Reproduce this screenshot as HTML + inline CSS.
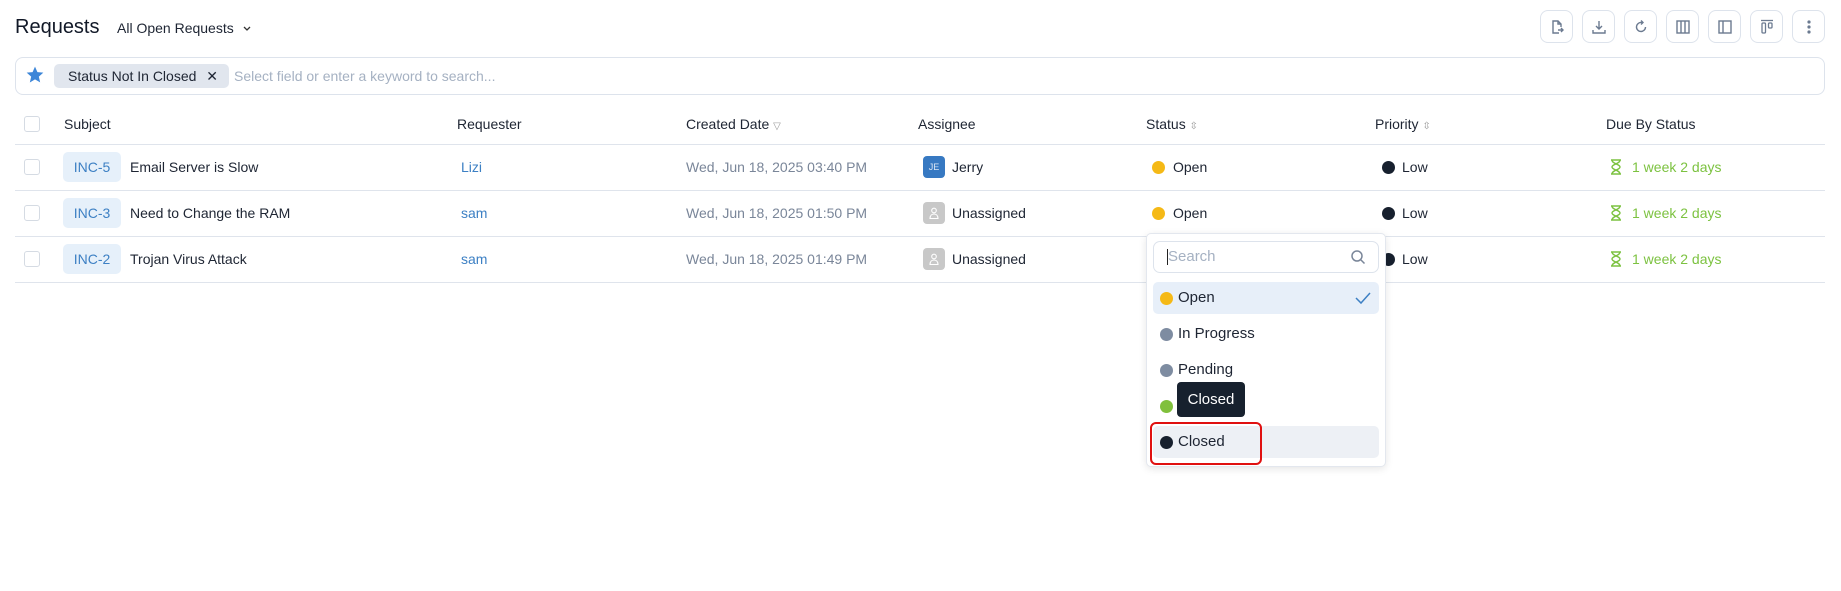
<!DOCTYPE html>
<html><head><meta charset="utf-8"><style>
*{box-sizing:border-box;margin:0;padding:0}
body{width:1841px;height:591px;background:#fff;font-family:"Liberation Sans",sans-serif;color:#1e2533;position:relative;overflow:hidden}
.a{position:absolute;white-space:nowrap}
.t14{font-size:14px;line-height:18px}
.btn{position:absolute;top:10px;width:33px;height:33px;border:1px solid #dde3ec;border-radius:8px;display:flex;align-items:center;justify-content:center}
.line{position:absolute;left:15px;width:1810px;height:1px;background:#dfe4ec}
.cb{position:absolute;left:24px;width:16px;height:16px;border:1px solid #d5dbe3;border-radius:3px;background:#fff}
.pill{position:absolute;left:63px;width:58px;height:30px;background:#e6f0fa;border-radius:5px;color:#3d80c4;font-size:14px;line-height:30px;text-align:center}
.dot{position:absolute;width:13px;height:13px;border-radius:50%}
.blue{color:#3d80c4}.gray{color:#7a8699}.green{color:#7cc240}
.av{position:absolute;left:923px;width:22px;height:22px;background:#c8c8c8;border-radius:4px;display:flex;align-items:center;justify-content:center}
</style></head><body>
<div class="a" style="left:15px;top:15px;font-size:20px;line-height:24px;color:#111827">Requests</div>
<div class="a t14" style="left:117px;top:19px">All Open Requests <svg width="10" height="8" viewBox="0 0 10 8" style="margin-left:4px"><path d="M2 2l3 3 3-3" fill="none" stroke="#333" stroke-width="1.3"/></svg></div>

<div class="btn" style="left:1540px"><svg width="16" height="16" viewBox="0 0 16 16" fill="none" stroke="#6b7a90" stroke-width="1.4"><path d="M10 14H4V2h5l3 3v3"/><path d="M9 2v3h3"/><path d="M9 11h5M12 9l2 2-2 2"/></svg></div>
<div class="btn" style="left:1582px"><svg width="16" height="16" viewBox="0 0 16 16" fill="none" stroke="#6b7a90" stroke-width="1.4"><path d="M8 2v8M5 7l3 3 3-3M2 11v3h12v-3"/></svg></div>
<div class="btn" style="left:1624px"><svg width="16" height="16" viewBox="0 0 16 16" fill="none" stroke="#6b7a90" stroke-width="1.4"><path d="M12.5 8A4.5 4.5 0 1 1 9 3.6"/><path d="M8 1.5l2 2-2 2"/></svg></div>
<div class="btn" style="left:1666px"><svg width="16" height="16" viewBox="0 0 16 16" fill="none" stroke="#6b7a90" stroke-width="1.4"><rect x="2" y="2" width="12" height="12"/><path d="M6 2v12M10 2v12"/></svg></div>
<div class="btn" style="left:1708px"><svg width="16" height="16" viewBox="0 0 16 16" fill="none" stroke="#6b7a90" stroke-width="1.4"><rect x="2" y="2" width="12" height="12"/><path d="M6 2v12"/></svg></div>
<div class="btn" style="left:1750px"><svg width="16" height="16" viewBox="0 0 16 16" fill="none" stroke="#6b7a90" stroke-width="1.3"><path d="M2 1.5h12"/><rect x="3" y="4" width="3.5" height="10" rx="1"/><rect x="9.5" y="4" width="3.5" height="5" rx="1"/></svg></div>
<div class="btn" style="left:1792px"><svg width="6" height="16" viewBox="0 0 6 16" fill="#6b7a90"><circle cx="3" cy="3" r="1.6"/><circle cx="3" cy="8" r="1.6"/><circle cx="3" cy="13" r="1.6"/></svg></div>

<div class="a" style="left:15px;top:57px;width:1810px;height:38px;border:1px solid #dde3ec;border-radius:8px"></div>
<svg class="a" style="left:25px;top:65px" width="20" height="20" viewBox="0 0 24 24"><path d="M12 2l2.9 6.6 7.1.6-5.4 4.7 1.6 7L12 17.3 5.8 21l1.6-7L2 9.2l7.1-.6z" fill="#3d86d8"/></svg>
<div class="a t14" style="left:54px;top:64px;width:175px;height:24px;background:#e1e6ee;border-radius:5px;line-height:24px;padding-left:14px;color:#1e2533">Status Not In Closed <span style="margin-left:6px">✕</span></div>
<div class="a t14" style="left:234px;top:67px;color:#a5b1c2">Select field or enter a keyword to search...</div>

<div class="cb" style="top:116px"></div>
<div class="a t14" style="left:64px;top:115px">Subject</div>
<div class="a t14" style="left:457px;top:115px">Requester</div>
<div class="a t14" style="left:686px;top:115px">Created Date <span style="color:#999;font-size:10px">▽</span></div>
<div class="a t14" style="left:918px;top:115px">Assignee</div>
<div class="a t14" style="left:1146px;top:115px">Status <span style="color:#999;font-size:10px">⇳</span></div>
<div class="a t14" style="left:1375px;top:115px">Priority <span style="color:#999;font-size:10px">⇳</span></div>
<div class="a t14" style="left:1606px;top:115px">Due By Status</div>
<div class="line" style="top:144px"></div>

<div class="cb" style="top:159px"></div>
<div class="pill" style="top:152px">INC-5</div>
<div class="a t14" style="left:130px;top:158px">Email Server is Slow</div>
<div class="a t14 blue" style="left:461px;top:158px">Lizi</div>
<div class="a t14 gray" style="left:686px;top:158px">Wed, Jun 18, 2025 03:40 PM</div>
<div class="a" style="left:923px;top:156px;width:22px;height:22px;background:#3779c2;border-radius:4px;color:#dbe7f5;font-size:9px;line-height:22px;text-align:center">JE</div>
<div class="a t14" style="left:952px;top:158px">Jerry</div>
<div class="dot" style="left:1152px;top:161px;background:#f5b916"></div>
<div class="a t14" style="left:1173px;top:158px">Open</div>
<div class="dot" style="left:1382px;top:161px;background:#17202e"></div>
<div class="a t14" style="left:1402px;top:158px">Low</div>
<div class="line" style="top:190px"></div>

<div class="cb" style="top:205px"></div>
<div class="pill" style="top:198px">INC-3</div>
<div class="a t14" style="left:130px;top:204px">Need to Change the RAM</div>
<div class="a t14 blue" style="left:461px;top:204px">sam</div>
<div class="a t14 gray" style="left:686px;top:204px">Wed, Jun 18, 2025 01:50 PM</div>
<div class="av" style="top:202px"><svg width="10" height="12" viewBox="0 0 10 12" fill="none" stroke="#fff" stroke-width="1.1"><circle cx="5" cy="3.5" r="2.3"/><path d="M1 11.5c0-3 1.8-4.5 4-4.5s4 1.5 4 4.5z"/></svg></div>
<div class="a t14" style="left:952px;top:204px">Unassigned</div>
<div class="dot" style="left:1152px;top:207px;background:#f5b916"></div>
<div class="a t14" style="left:1173px;top:204px">Open</div>
<div class="dot" style="left:1382px;top:207px;background:#17202e"></div>
<div class="a t14" style="left:1402px;top:204px">Low</div>
<div class="line" style="top:236px"></div>

<div class="cb" style="top:251px"></div>
<div class="pill" style="top:244px">INC-2</div>
<div class="a t14" style="left:130px;top:250px">Trojan Virus Attack</div>
<div class="a t14 blue" style="left:461px;top:250px">sam</div>
<div class="a t14 gray" style="left:686px;top:250px">Wed, Jun 18, 2025 01:49 PM</div>
<div class="av" style="top:248px"><svg width="10" height="12" viewBox="0 0 10 12" fill="none" stroke="#fff" stroke-width="1.1"><circle cx="5" cy="3.5" r="2.3"/><path d="M1 11.5c0-3 1.8-4.5 4-4.5s4 1.5 4 4.5z"/></svg></div>
<div class="a t14" style="left:952px;top:250px">Unassigned</div>
<div class="dot" style="left:1382px;top:253px;background:#17202e"></div>
<div class="a t14" style="left:1402px;top:250px">Low</div>
<div class="line" style="top:282px"></div>

<svg class="a" style="left:1610px;top:159px" width="12" height="16" viewBox="0 0 12 16" fill="none" stroke="#7cc240" stroke-width="1.4"><path d="M1 1h10M1 15h10M2 1c0 4 8 4 8 7s-8 3-8 7M10 1c0 4-8 4-8 7s8 3 8 7"/></svg>
<div class="a t14 green" style="left:1632px;top:158px">1 week 2 days</div>
<svg class="a" style="left:1610px;top:205px" width="12" height="16" viewBox="0 0 12 16" fill="none" stroke="#7cc240" stroke-width="1.4"><path d="M1 1h10M1 15h10M2 1c0 4 8 4 8 7s-8 3-8 7M10 1c0 4-8 4-8 7s8 3 8 7"/></svg>
<div class="a t14 green" style="left:1632px;top:204px">1 week 2 days</div>
<svg class="a" style="left:1610px;top:251px" width="12" height="16" viewBox="0 0 12 16" fill="none" stroke="#7cc240" stroke-width="1.4"><path d="M1 1h10M1 15h10M2 1c0 4 8 4 8 7s-8 3-8 7M10 1c0 4-8 4-8 7s8 3 8 7"/></svg>
<div class="a t14 green" style="left:1632px;top:250px">1 week 2 days</div>

<div class="a" style="left:1146px;top:233px;width:240px;height:234px;background:#fff;border:1px solid #e3e7ee;border-radius:5px;box-shadow:0 2px 8px rgba(0,0,0,.1)"></div>
<div class="a" style="left:1153px;top:241px;width:226px;height:32px;border:1px solid #dde3ec;border-radius:7px"></div>
<div class="a" style="left:1167px;top:249px;width:1px;height:16px;background:#222"></div>
<div class="a" style="left:1168px;top:248px;font-size:15px;color:#a5b1c2">Search</div>
<svg class="a" style="left:1350px;top:249px" width="16" height="16" viewBox="0 0 16 16" fill="none" stroke="#7a8699" stroke-width="1.5"><circle cx="7" cy="7" r="5"/><path d="M11 11l3.5 3.5"/></svg>
<div class="a" style="left:1153px;top:282px;width:226px;height:32px;background:#e7eff9;border-radius:5px"></div>
<div class="dot" style="left:1160px;top:292px;background:#f5b916"></div>
<div class="a" style="left:1178px;top:289px;font-size:15px">Open</div>
<svg class="a" style="left:1355px;top:291px" width="16" height="14" viewBox="0 0 16 14" fill="none" stroke="#3d80c4" stroke-width="1.5"><path d="M1 7l5 5L15 2"/></svg>
<div class="dot" style="left:1160px;top:328px;background:#7e8ca1"></div>
<div class="a" style="left:1178px;top:325px;font-size:15px">In Progress</div>
<div class="dot" style="left:1160px;top:364px;background:#7e8ca1"></div>
<div class="a" style="left:1178px;top:361px;font-size:15px">Pending</div>
<div class="dot" style="left:1160px;top:400px;background:#80c03c"></div>
<div class="a" style="left:1177px;top:382px;width:68px;height:35px;background:#17212e;border-radius:4px;color:#fff;font-size:15px;line-height:35px;text-align:center">Closed</div>
<div class="a" style="left:1153px;top:426px;width:226px;height:32px;background:#edf0f5;border-radius:5px"></div>
<div class="a" style="left:1150px;top:422px;width:112px;height:43px;border:2px solid #e01010;border-radius:6px"></div>
<div class="dot" style="left:1160px;top:436px;background:#17202e"></div>
<div class="a" style="left:1178px;top:433px;font-size:15px">Closed</div>
</body></html>
